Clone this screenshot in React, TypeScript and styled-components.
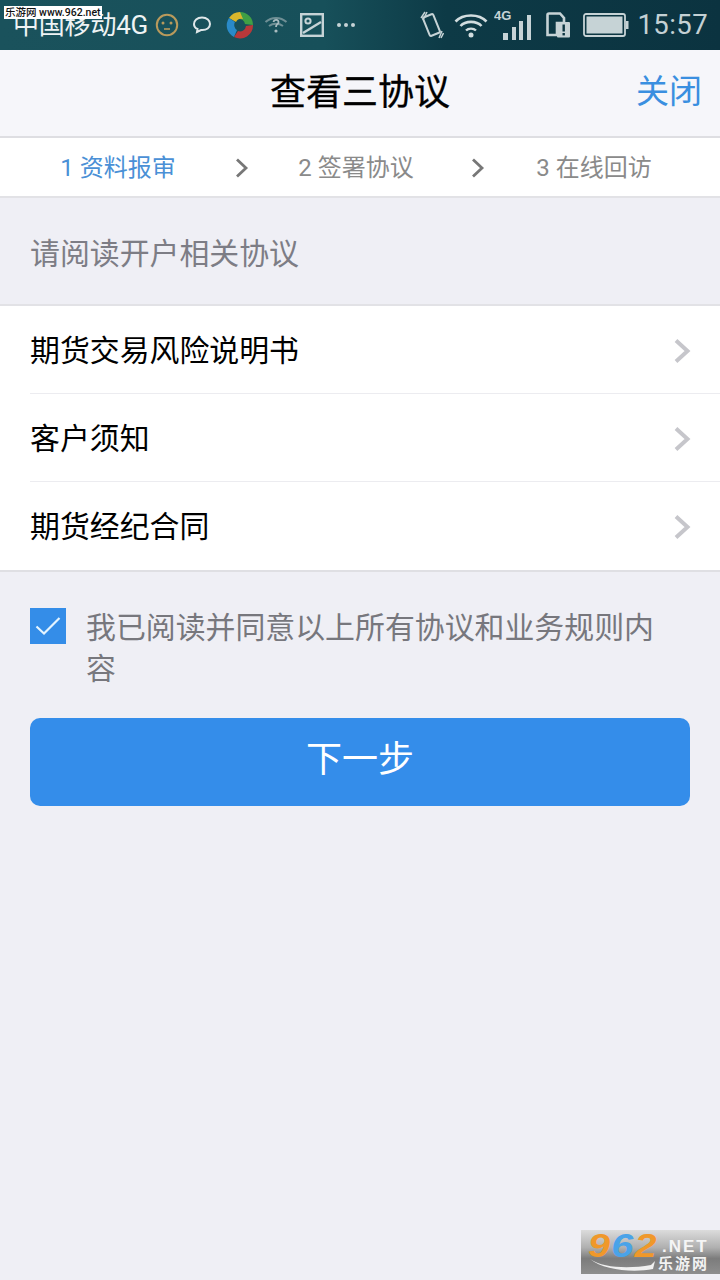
import React from "react";
import styled, { createGlobalStyle } from "styled-components";

const Global = createGlobalStyle`
  html, body { margin: 0; padding: 0; background: #efeff5; }
  body { font-family: "Roboto", "Noto Sans CJK SC", sans-serif; }
  * { box-sizing: border-box; }
`;
const Screen = styled.div`
  position: relative; width: 720px; height: 1280px; overflow: hidden;
  background: #efeff5; display: flex; flex-direction: column;
`;
const StatusBar = styled.div`
  height: 50px; flex: none; display: flex; align-items: center; justify-content: space-between;
  background: linear-gradient(90deg, #1a525c 0%, #17505a 45%, #0d3a46 62%, #0b3340 100%);
  padding: 0 12px 0 13px; color: #c9d6d9;
`;
const StatusGroup = styled.div`
  display: flex; align-items: center; height: 50px;
`;
const Carrier = styled.span`
  font-size: 26px; line-height: 50px; color: #eef3f4; white-space: nowrap; letter-spacing: -0.2px;
`;
const Clock = styled.span`
  font-size: 27.5px; line-height: 50px; color: #c4d1d4; margin-left: 9px; letter-spacing: 0.4px;
`;
const StatusIcon = styled.svg<{ $ml?: number }>`
  flex: none; display: block; margin-left: ${p => p.$ml ?? 0}px;
`;
const NavBar = styled.div`
  height: 88px; flex: none; position: relative; display: flex; align-items: center; justify-content: center;
  background: #f6f6fa; border-bottom: 2px solid #dedee2;
`;
const NavTitle = styled.h1`
  margin: 0; font-size: 36px; font-weight: 400; color: #000; line-height: 1; -webkit-text-stroke: 0.3px #000;
`;
const NavAction = styled.span`
  position: absolute; right: 18px; top: 24px; font-size: 33px; line-height: 36px; color: #3a8fe0;
`;
const Steps = styled.div`
  height: 60px; flex: none; background: #fff; border-bottom: 2px solid #e2e2e6;
  display: grid; grid-template-columns: 236px 236px 248px; align-items: center; padding-bottom: 1px;
`;
const Step = styled.div<{ $active?: boolean; $pl?: number; $pr?: number }>`
  position: relative; height: 58px; display: flex; align-items: center; justify-content: center;
  font-size: 24px; color: ${p => (p.$active ? "#4a90d6" : "#8a8a8a")};
  padding: 0 ${p => p.$pr ?? 0}px 4px ${p => p.$pl ?? 0}px;
  white-space: pre;
`;
const StepChevron = styled.svg`
  position: absolute; right: -13px; top: 20px;
`;
const SectionHead = styled.div`
  height: 108px; flex: none; display: flex; align-items: center; padding: 0 30px 1px;
  font-size: 29.9px; color: #7d7d85; border-bottom: 2px solid #e2e2e6;
`;
const List = styled.div`
  flex: none; background: #fff; border-bottom: 2px solid #dfdfe3; padding-left: 30px;
`;
const Row = styled.div<{ $last?: boolean }>`
  height: 88px; display: flex; align-items: center; justify-content: space-between;
  padding-right: 29px; font-size: 29.9px; color: #000;
  border-bottom: ${p => (p.$last ? "none" : "1px solid #ececf0")};
`;
const RowLabel = styled.span`
  margin-top: -4px;
`;
const RowChevron = styled.svg`
  display: block; margin-top: 2px;
`;
const Agree = styled.div`
  display: flex; align-items: flex-start; padding: 36px 60px 0 30px; gap: 20px; height: 146px; flex: none;
`;
const CheckBox = styled.div`
  width: 36px; height: 36px; flex: none; background: #348de8; display: flex; align-items: center; justify-content: center;
`;
const AgreeText = styled.div`
  font-size: 29.9px; line-height: 41px; color: #77777d; margin-top: -1px;
`;
const NextButton = styled.button`
  display: flex; align-items: center; justify-content: center; flex: none;
  margin: 0 30px; width: 660px; height: 88px; border: none; border-radius: 10px;
  background: #348dea; color: #fff; font-size: 36px; font-family: inherit; padding: 0 0 12px;
`;
const SiteTag = styled.div`
  position: absolute; left: 4px; top: 6px; width: 98px; height: 13px; background: #fff;
  font-size: 10.5px; line-height: 13px; color: #111; white-space: nowrap; padding-left: 1px; font-weight: 500;
`;
const Logo = styled.div`
  position: absolute; left: 581px; top: 1230px; width: 139px; height: 44px;
  background: linear-gradient(180deg, #dcdcdc 0%, #b0b0b0 40%, #7c7c7c 65%, #8e8e8e 100%);
`;
const LogoNumber = styled.div`
  position: absolute; left: 7px; top: 0; font: italic 700 33px/32px "Liberation Sans", sans-serif;
  letter-spacing: 1px; color: #f0982a; transform: scaleX(1.2); transform-origin: left center;
`;
const LogoBlue = styled.span`
  color: #4aa3e8;
`;
const LogoNet = styled.div`
  position: absolute; left: 81px; top: 7px; font: 700 17px/20px "Liberation Sans", sans-serif; color: #f5f5f5; letter-spacing: 2px;
`;
const LogoCn = styled.div`
  position: absolute; left: 77px; top: 25px; font-size: 15px; line-height: 18px; color: #f2f2f2; letter-spacing: 2px; font-weight: 700;
`;
const LogoSwoosh = styled.svg`
  position: absolute; left: 8px; top: 28px;
`;

const rows = ["期货交易风险说明书", "客户须知", "期货经纪合同"];

export default function App() {
  return (
    <Screen>
      <Global />
      <StatusBar>
        <StatusGroup>
          <Carrier>中国移动4G</Carrier>
          <StatusIcon $ml={7} width="24" height="24" viewBox="0 0 24 24">
            <circle cx="12" cy="12" r="10.2" fill="none" stroke="#b99a5c" strokeWidth="2" />
            <circle cx="8" cy="10" r="1.5" fill="#b99a5c" />
            <circle cx="16" cy="10" r="1.5" fill="#b99a5c" />
            <path d="M9 16 H15" stroke="#b99a5c" strokeWidth="1.6" />
          </StatusIcon>
          <StatusIcon $ml={13} width="20" height="20" viewBox="0 0 20 20">
            <path d="M10 2.5 C5 2.5 2 5.5 2 9 C2 11.5 3.5 13.2 5.5 14 L5 17 L9 15 C15 15.5 18 12.5 18 9 C18 5.5 15 2.5 10 2.5 Z" fill="none" stroke="#dfe7e9" strokeWidth="2" />
          </StatusIcon>
          <StatusIcon $ml={14} width="28" height="28" viewBox="0 0 28 28">
            <path d="M14 1 A13 13 0 0 1 27 14 L19 13 A6 6 0 0 0 12 8 Z" fill="#3f9f45" />
            <path d="M14 1 A13 13 0 0 0 3 7 L10 11 A6 6 0 0 1 17 8 Z" fill="#d9b62c" />
            <path d="M3 7 A13 13 0 0 0 8 26 L11 19 A6 6 0 0 1 9 11 Z" fill="#2a8ac8" />
            <path d="M8 26 A13 13 0 0 0 27 14 L20 15 A6 6 0 0 1 12 20 Z" fill="#b8383a" />
          </StatusIcon>
          <StatusIcon $ml={10} width="24" height="22" viewBox="0 0 24 22">
            <path d="M1.5 8 C7.5 2.5 16.5 2.5 22.5 8" fill="none" stroke="#6f8f95" strokeWidth="2" />
            <path d="M5 12 C9 9 15 9 19 12" fill="none" stroke="#6f8f95" strokeWidth="2" />
            <path d="M9.5 8 C10 5 15 5 14.5 8.5 C14 10.5 12 10 12 13" fill="none" stroke="#a9bcc0" strokeWidth="1.8" />
            <circle cx="12" cy="17" r="1.6" fill="#a9bcc0" />
          </StatusIcon>
          <StatusIcon $ml={12} width="24" height="24" viewBox="0 0 24 24">
            <rect x="1.2" y="1.2" width="21.6" height="21.6" fill="none" stroke="#c6d3d6" strokeWidth="2.4" />
            <circle cx="8" cy="8" r="2.6" fill="none" stroke="#c6d3d6" strokeWidth="2" />
            <path d="M3 20 L21 9" stroke="#c6d3d6" strokeWidth="2.4" />
          </StatusIcon>
          <StatusIcon $ml={12} width="20" height="6" viewBox="0 0 20 6">
            <circle cx="3" cy="3" r="2" fill="#c6d3d6" />
            <circle cx="10" cy="3" r="2" fill="#c6d3d6" />
            <circle cx="17" cy="3" r="2" fill="#c6d3d6" />
          </StatusIcon>
        </StatusGroup>
        <StatusGroup>
          <StatusIcon width="24" height="28" viewBox="0 0 24 28">
            <rect x="6" y="4" width="11" height="20" rx="1.5" transform="rotate(-22 11.5 14)" fill="none" stroke="#c6d3d6" strokeWidth="2" />
            <path d="M5 1 L1 7 M7 1 L3 9 M22 20 L19 27 M23.5 22 L21 27" stroke="#c6d3d6" strokeWidth="1.5" />
          </StatusIcon>
          <StatusIcon $ml={10} width="34" height="26" viewBox="0 0 34 26">
            <path d="M1.5 9.5 C9 1.5 25 1.5 32.5 9.5" fill="none" stroke="#d2dddf" strokeWidth="2.6" />
            <path d="M6.5 14 C11.5 8.5 22.5 8.5 27.5 14" fill="none" stroke="#d2dddf" strokeWidth="2.6" />
            <path d="M12 18.5 C14.5 16 19.5 16 22 18.5" fill="none" stroke="#d2dddf" strokeWidth="2.4" />
            <circle cx="17" cy="23" r="2.5" fill="#d2dddf" />
          </StatusIcon>
          <StatusIcon $ml={6} width="40" height="32" viewBox="0 0 40 32">
            <text x="0" y="11" fontSize="13" fontWeight="700" fontFamily="Liberation Sans, sans-serif" fill="#c6d3d6">4G</text>
            <rect x="9" y="24" width="5" height="7" fill="#c6d3d6" />
            <rect x="18" y="18" width="4" height="13" fill="#c6d3d6" />
            <rect x="25" y="12" width="4" height="19" fill="#c6d3d6" />
            <rect x="33" y="6" width="4" height="25" fill="#c6d3d6" />
          </StatusIcon>
          <StatusIcon $ml={12} width="24" height="26" viewBox="0 0 24 26">
            <path d="M1.5 23 V3 Q1.5 1.5 3 1.5 H14 L18 6 V11 H11 V23 Z" fill="none" stroke="#c6d3d6" strokeWidth="2.6" />
            <rect x="11" y="10" width="13" height="15.5" rx="1" fill="#c6d3d6" />
            <rect x="16.5" y="12.5" width="2.4" height="7" fill="#0c3541" />
            <rect x="16.5" y="21" width="2.4" height="2.4" fill="#0c3541" />
          </StatusIcon>
          <StatusIcon $ml={13} width="46" height="24" viewBox="0 0 46 24">
            <rect x="1" y="1" width="41" height="22" rx="2" fill="none" stroke="#c6d3d6" strokeWidth="1.8" />
            <rect x="3.5" y="3.5" width="36" height="17" fill="#c6d3d6" />
            <rect x="43" y="8" width="2.5" height="8" fill="#c6d3d6" />
          </StatusIcon>
          <Clock>15:57</Clock>
        </StatusGroup>
      </StatusBar>
      <NavBar>
        <NavTitle>查看三协议</NavTitle>
        <NavAction>关闭</NavAction>
      </NavBar>
      <Steps>
        <Step $active>
          1 资料报审
          <StepChevron width="14" height="20" viewBox="0 0 14 20">
            <path d="M2 1.5 L11 10 L2 18.5" fill="none" stroke="#777" strokeWidth="2.8" />
          </StepChevron>
        </Step>
        <Step $pl={4}>
          2 签署协议
          <StepChevron width="14" height="20" viewBox="0 0 14 20">
            <path d="M2 1.5 L11 10 L2 18.5" fill="none" stroke="#777" strokeWidth="2.8" />
          </StepChevron>
        </Step>
        <Step $pr={4}>3 在线回访</Step>
      </Steps>
      <SectionHead>请阅读开户相关协议</SectionHead>
      <List>
        {rows.map((r, i) => (
          <Row key={r} $last={i === rows.length - 1}>
            <RowLabel>{r}</RowLabel>
            <RowChevron width="18" height="26" viewBox="0 0 18 26">
              <path d="M3 2.5 L14.5 13 L3 23.5" fill="none" stroke="#c6c6cb" strokeWidth="4" />
            </RowChevron>
          </Row>
        ))}
      </List>
      <Agree>
        <CheckBox>
          <svg width="26" height="20" viewBox="0 0 26 20">
            <path d="M1.5 10.5 L9 17.5 L24.5 2" fill="none" stroke="#e4f4ff" strokeWidth="2.2" />
          </svg>
        </CheckBox>
        <AgreeText>我已阅读并同意以上所有协议和业务规则内容</AgreeText>
      </Agree>
      <NextButton>下一步</NextButton>
      <SiteTag>乐游网 www.962.net</SiteTag>
      <Logo>
        <LogoNumber>
          9<LogoBlue>6</LogoBlue>2
        </LogoNumber>
        <LogoSwoosh width="66" height="14" viewBox="0 0 66 14">
          <path d="M1 1 C14 10 40 11 62 7 L66 3 L64 11 C44 15 14 12 1 1 Z" fill="#f0f0f0" />
        </LogoSwoosh>
        <LogoNet>.NET</LogoNet>
        <LogoCn>乐游网</LogoCn>
      </Logo>
    </Screen>
  );
}
